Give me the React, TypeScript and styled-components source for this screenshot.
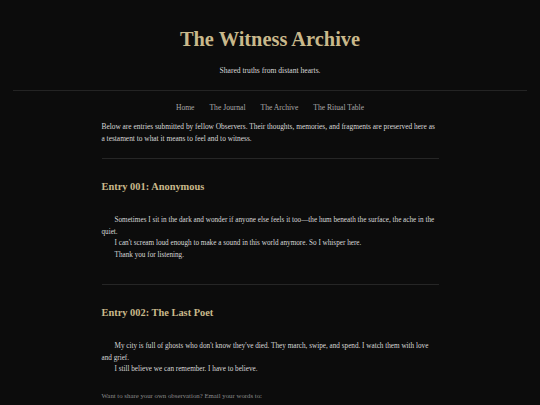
import styled, { createGlobalStyle } from 'styled-components';

const GlobalStyle = createGlobalStyle`
  html, body {
    margin: 0;
    padding: 0;
    background: #0c0c0c;
  }
  body {
    font-family: Georgia, "Liberation Serif", serif;
    color: #d6d6d6;
  }
`;

const Page = styled.div`
  padding: 0 13px;
`;

const Header = styled.header`
  display: flex;
  flex-direction: column;
  align-items: center;
  padding: 28px 0 15px;
  border-bottom: 1px solid #242424;
`;

const Title = styled.h1`
  margin: 0;
  font-size: 20.4px;
  font-weight: bold;
  color: #c9b98b;
  line-height: 22px;
`;

const Subtitle = styled.p`
  margin: 16px 0 0;
  font-size: 7.6px;
  color: #d8d8d8;
`;

const Nav = styled.nav`
  display: flex;
  justify-content: center;
  gap: 15px;
  padding: 12px 0 0;
`;

const NavLink = styled.a`
  font-size: 7.6px;
  color: #a8a8a8;
  text-decoration: none;
`;

const Main = styled.main`
  width: 337px;
  margin: 0 auto;
`;

const Intro = styled.p`
  margin: 9px 0 0;
  font-size: 7.38px;
  line-height: 12px;
  color: #d8d8d8;
`;

const Divider = styled.hr`
  border: none;
  border-top: 1px solid #262626;
  margin: 13px 0 0;
`;

const Entry = styled.section`
  padding: 22px 0 10px;
`;

const EntryTitle = styled.h2`
  margin: 0;
  font-size: 10.4px;
  font-weight: bold;
  color: #c9b98b;
`;

const EntryBody = styled.p`
  margin: 23px 0 0;
  font-size: 7.2px;
  line-height: 11.5px;
  color: #d8d8d8;
`;

const Indent = styled.span`
  display: inline-block;
  width: 13px;
`;

const Footer = styled.p`
  margin: 4px 0 0;
  font-size: 6.8px;
  line-height: 11.6px;
  color: #8a8a8a;
`;

const entries = [
  {
    id: '001',
    name: 'Anonymous',
    lines: [
      'Sometimes I sit in the dark and wonder if anyone else feels it too\u2014the hum beneath the surface, the ache in the quiet.',
      "I can't scream loud enough to make a sound in this world anymore. So I whisper here.",
      'Thank you for listening.',
    ],
  },
  {
    id: '002',
    name: 'The Last Poet',
    lines: [
      "My city is full of ghosts who don't know they've died. They march, swipe, and spend. I watch them with love and grief.",
      'I still believe we can remember. I have to believe.',
    ],
  },
];

const App = () => {
  return (
    <Page>
      <GlobalStyle />
      <Header>
        <Title>The Witness Archive</Title>
        <Subtitle>Shared truths from distant hearts.</Subtitle>
      </Header>
      <Nav>
        <NavLink href="#">Home</NavLink>
        <NavLink href="#">The Journal</NavLink>
        <NavLink href="#">The Archive</NavLink>
        <NavLink href="#">The Ritual Table</NavLink>
      </Nav>
      <Main>
        <Intro>
          Below are entries submitted by fellow Observers. Their thoughts, memories, and fragments are
          preserved here as a testament to what it means to feel and to witness.
        </Intro>
        {entries.map(entry => (
          <div key={entry.id}>
            <Divider />
            <Entry>
              <EntryTitle>
                Entry {entry.id}: {entry.name}
              </EntryTitle>
              <EntryBody>
                {entry.lines.map((line, i) => (
                  <span key={i}>
                    {i > 0 && <br />}
                    <Indent />
                    {line}
                  </span>
                ))}
              </EntryBody>
            </Entry>
          </div>
        ))}
        <Footer>
          Want to share your own observation? Email your words to:
          <br />
          theobservers@theawakening.com
        </Footer>
      </Main>
    </Page>
  );
};

export default App;
